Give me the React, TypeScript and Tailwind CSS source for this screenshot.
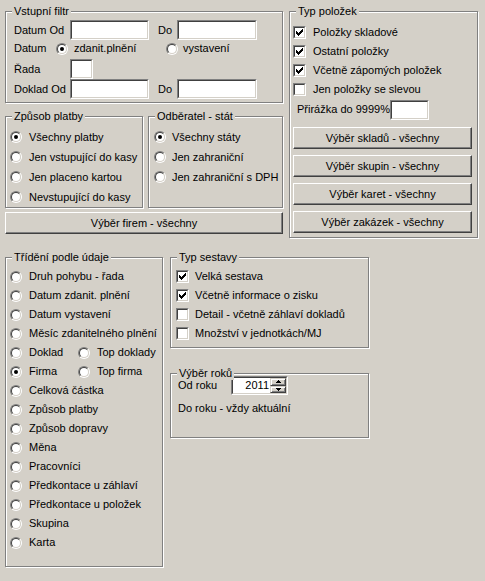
import type { ReactNode } from "react";

const sunken =
  "border border-t-[#808080] border-l-[#808080] border-r-white border-b-white";
const sunkenInner =
  "border border-t-[#404040] border-l-[#404040] border-r-[#d4d0c8] border-b-[#d4d0c8]";

function Group({ title, className, children }: { title: string; className: string; children?: ReactNode }) {
  return (
    <div className={`relative border border-[#808080] shadow-[1px_1px_0_#fff,inset_1px_1px_0_#fff] ${className}`}>
      <span className="absolute -top-[7px] left-[6px] px-[2px] bg-[#d4d0c8] leading-[13px] whitespace-nowrap">
        {title}
      </span>
      {children}
    </div>
  );
}

function Input({ className, children }: { className: string; children?: ReactNode }) {
  return (
    <div className={`${sunken} shrink-0 ${className}`}>
      <div className={`${sunkenInner} w-full h-full bg-white flex`}>{children}</div>
    </div>
  );
}

function Radio({ checked = false }: { checked?: boolean }) {
  return (
    <span className={`${sunken} block w-[12px] h-[12px] rounded-full shrink-0`}>
      <span className={`${sunkenInner} w-full h-full rounded-full bg-white flex items-center justify-center`}>
        {checked && <span className="block w-[4px] h-[4px] rounded-full bg-black" />}
      </span>
    </span>
  );
}

function Check({ checked = false }: { checked?: boolean }) {
  return (
    <span className={`${sunken} block w-[13px] h-[13px] shrink-0`}>
      <span className={`${sunkenInner} block w-full h-full bg-white`}>
        {checked && (
          <svg width="9" height="9" viewBox="0 0 9 9" className="block" shapeRendering="crispEdges">
            <rect x="1" y="3" width="1" height="3" fill="#000" />
            <rect x="2" y="4" width="1" height="3" fill="#000" />
            <rect x="3" y="5" width="1" height="3" fill="#000" />
            <rect x="4" y="4" width="1" height="3" fill="#000" />
            <rect x="5" y="3" width="1" height="3" fill="#000" />
            <rect x="6" y="2" width="1" height="3" fill="#000" />
            <rect x="7" y="1" width="1" height="3" fill="#000" />
          </svg>
        )}
      </span>
    </span>
  );
}

function Button({ label, className }: { label: string; className: string }) {
  return (
    <button
      type="button"
      className={`border border-t-white border-l-white border-r-[#404040] border-b-[#404040] shadow-[inset_-1px_-1px_0_#808080] bg-[#d4d0c8] flex items-center justify-center leading-none ${className}`}
    >
      {label}
    </button>
  );
}

function SpinBtn({ up }: { up?: boolean }) {
  return (
    <div className="flex-1 border border-t-[#d4d0c8] border-l-[#d4d0c8] border-r-[#404040] border-b-[#404040] shadow-[inset_1px_1px_0_#fff,inset_-1px_-1px_0_#808080] bg-[#d4d0c8] flex items-center justify-center">
      <svg width="5" height="3" viewBox="0 0 5 3" shapeRendering="crispEdges" className="block">
        {up ? (
          <>
            <rect x="2" y="0" width="1" height="1" fill="#000" />
            <rect x="1" y="1" width="3" height="1" fill="#000" />
            <rect x="0" y="2" width="5" height="1" fill="#000" />
          </>
        ) : (
          <>
            <rect x="0" y="0" width="5" height="1" fill="#000" />
            <rect x="1" y="1" width="3" height="1" fill="#000" />
            <rect x="2" y="2" width="1" height="1" fill="#000" />
          </>
        )}
      </svg>
    </div>
  );
}

const razeni = [
  "Druh pohybu - řada",
  "Datum zdanit. plnění",
  "Datum vystavení",
  "Měsíc zdanitelného plnění",
  "Doklad|Top doklady",
  "Firma|Top firma",
  "Celková částka",
  "Způsob platby",
  "Způsob dopravy",
  "Měna",
  "Pracovníci",
  "Předkontace u záhlaví",
  "Předkontace u položek",
  "Skupina",
  "Karta",
];

export default function App() {
  return (
    <div
      className="w-[485px] h-[581px] bg-[#d4d0c8] text-black text-[11px] pt-[11px] pl-[5px] overflow-hidden select-none"
      style={{ fontFamily: '"Liberation Sans", Arial, sans-serif' }}
    >
      <div className="flex items-start h-[246px]">
        <div className="flex flex-col w-[278px]">
          <Group title="Vstupní filtr" className="h-[92px] pt-[8px] pl-[8px]">
            <div className="flex items-center h-[20px]">
              <span className="w-[56px]">Datum Od</span>
              <Input className="w-[79px] h-[20px]" />
              <span className="ml-[9px] w-[19px]">Do</span>
              <Input className="w-[80px] h-[20px]" />
            </div>
            <div className="flex items-center h-[19px] pb-[2px]">
              <span className="w-[42px]">Datum</span>
              <Radio checked />
              <span className="ml-[6px] w-[92px]">zdanit.plnění</span>
              <Radio />
              <span className="ml-[5px]">vystavení</span>
            </div>
            <div className="flex items-center h-[20px]">
              <span className="w-[56px]">Řada</span>
              <Input className="w-[23px] h-[20px]" />
            </div>
            <div className="flex items-center h-[20px]">
              <span className="w-[56px]">Doklad Od</span>
              <Input className="w-[79px] h-[20px]" />
              <span className="ml-[9px] w-[19px]">Do</span>
              <Input className="w-[80px] h-[20px]" />
            </div>
          </Group>

          <div className="flex mt-[13px]">
            <Group title="Způsob platby" className="w-[138px] h-[92px] pt-[10px] pl-[4px]">
              {["Všechny platby", "Jen vstupující do kasy", "Jen placeno kartou", "Nevstupující do kasy"].map((t, i) => (
                <div key={t} className="flex items-center h-[20px]">
                  <Radio checked={i === 0} />
                  <span className="ml-[7px] whitespace-nowrap">{t}</span>
                </div>
              ))}
            </Group>
            <Group title="Odběratel - stát" className="ml-[5px] w-[135px] h-[92px] pt-[10px] pl-[5px]">
              {["Všechny státy", "Jen zahraniční", "Jen zahraniční s DPH"].map((t, i) => (
                <div key={t} className="flex items-center h-[20px]">
                  <Radio checked={i === 0} />
                  <span className="ml-[6px] whitespace-nowrap">{t}</span>
                </div>
              ))}
            </Group>
          </div>

          <Button label="Výběr firem - všechny" className="mt-[4px] w-[278px] h-[22px]" />
        </div>

        <Group title="Typ položek" className="ml-[6px] w-[189px] h-[227px] pt-[11px] pl-[3px]">
          {[
            ["Položky skladové", true],
            ["Ostatní položky", true],
            ["Včetně zápomých položek", true],
            ["Jen položky se slevou", false],
          ].map(([t, c]) => (
            <div key={t as string} className="flex items-center h-[19px]">
              <Check checked={c as boolean} />
              <span className="ml-[7px] whitespace-nowrap">{t as string}</span>
            </div>
          ))}
          <div className="flex items-center h-[21px]">
            <span className="w-[97px] pl-[4px] whitespace-nowrap">Přirážka do 9999%</span>
            <Input className="w-[39px] h-[20px]" />
          </div>
          <div className="flex flex-col gap-[6px] mt-[7px]">
            <Button label="Výběr skladů - všechny" className="w-[179px] h-[22px]" />
            <Button label="Výběr skupin - všechny" className="w-[179px] h-[22px]" />
            <Button label="Výběr karet - všechny" className="w-[179px] h-[22px]" />
            <Button label="Výběr zakázek - všechny" className="w-[179px] h-[22px]" />
          </div>
        </Group>
      </div>

      <div className="flex items-start">
        <Group title="Třídění podle údaje" className="w-[158px] h-[310px] pt-[9px] pl-[4px]">
          {razeni.map((r) => {
            const [a, b] = r.split("|");
            return (
              <div key={r} className="flex items-center h-[19px]">
                <Radio checked={a === "Firma"} />
                {b ? (
                  <>
                    <span className="ml-[7px] w-[49px]">{a}</span>
                    <Radio />
                    <span className="ml-[7px] whitespace-nowrap">{b}</span>
                  </>
                ) : (
                  <span className="ml-[7px] whitespace-nowrap">{a}</span>
                )}
              </div>
            );
          })}
        </Group>

        <div className="flex flex-col ml-[7px] w-[199px]">
          <Group title="Typ sestavy" className="h-[91px] pt-[9px] pl-[5px]">
            {[
              ["Velká sestava", true],
              ["Včetně informace o zisku", true],
              ["Detail - včetně záhlaví dokladů", false],
              ["Množství v jednotkách/MJ", false],
            ].map(([t, c]) => (
              <div key={t as string} className="flex items-center h-[19px]">
                <Check checked={c as boolean} />
                <span className="ml-[6px] whitespace-nowrap">{t as string}</span>
              </div>
            ))}
          </Group>

          <Group title="Výběr roků" className="mt-[25px] h-[65px] pt-[2px] pl-[7px]">
            <div className="flex items-center h-[19px]">
              <span className="w-[53px]">Od roku</span>
              <Input className="w-[57px] h-[19px]">
                <span className="flex-1 text-right pr-[1px] leading-[15px]">2011</span>
                <div className="w-[16px] flex flex-col">
                  <SpinBtn up />
                  <SpinBtn />
                </div>
              </Input>
            </div>
            <div className="flex items-center h-[19px] mt-[4px]">
              <span>Do roku - vždy aktuální</span>
            </div>
          </Group>
        </div>
      </div>
    </div>
  );
}
